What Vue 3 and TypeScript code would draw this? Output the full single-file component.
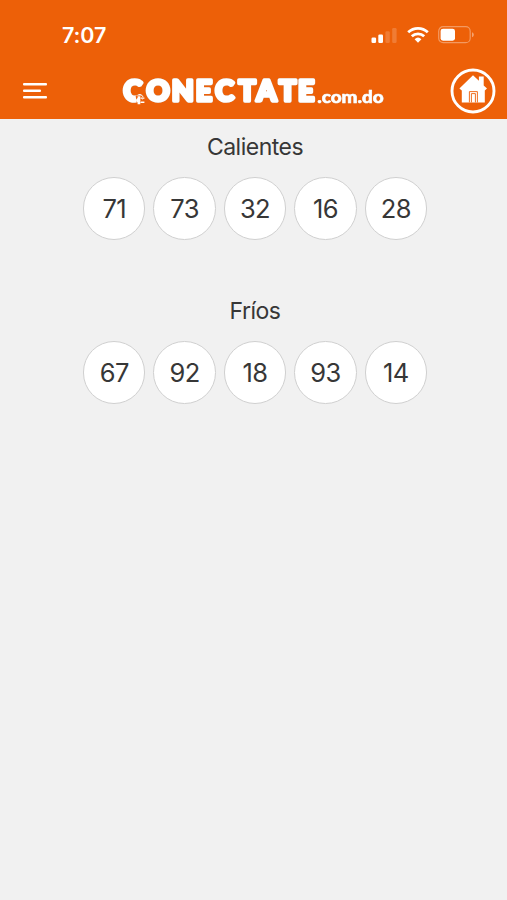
<script setup lang="ts">
interface NumberGroup {
  title: string
  numbers: number[]
}

const groups: NumberGroup[] = [
  { title: 'Calientes', numbers: [71, 73, 32, 16, 28] },
  { title: 'Fríos', numbers: [67, 92, 18, 93, 14] },
]
</script>

<template>
  <div class="screen">
    <header class="header">
      <div class="status">
        <span class="time">7:07</span>
        <div class="indicators">
          <svg class="signal" width="26" height="18" viewBox="0 0 26 18" fill="#fff">
            <rect x="0.5" y="11.5" width="4.6" height="5.5" rx="1.3" />
            <rect x="7.3" y="8.5" width="4.7" height="8.5" rx="1.3" />
            <rect x="14.4" y="5.2" width="4.4" height="11.8" rx="1.3" opacity=".18" />
            <rect x="21.2" y="2" width="4.4" height="15" rx="1.3" opacity=".18" />
          </svg>
          <svg class="wifi" width="24" height="18" viewBox="0 0 24 18">
            <g fill="none" stroke="#fff" stroke-width="2.8">
              <path d="M2.2 6.3A14.3 14.3 0 0 1 21.8 6.3" />
              <path d="M5.8 10.3A9 9 0 0 1 18.2 10.3" />
            </g>
            <path d="M8.6 13.2A5 5 0 0 1 15.4 13.2L12 16.7Z" fill="#fff" />
          </svg>
          <svg class="battery" width="37" height="18" viewBox="0 0 37 18">
            <rect x="0.7" y="0.7" width="31.5" height="16" rx="4.5" fill="none" stroke="#fff" stroke-opacity=".36" stroke-width="1.2" />
            <rect x="2.6" y="2.7" width="14.4" height="12" rx="2.4" fill="#fff" />
            <path d="M34 6.2C36.4 7 36.4 10.4 34 11.2Z" fill="#fff" opacity=".42" />
          </svg>
        </div>
      </div>
      <div class="bar">
        <button class="menu" aria-label="Menú">
          <svg width="24" height="18" viewBox="0 0 24 18" fill="#fff">
            <rect x="0" y="1" width="24" height="2.4" rx="1" />
            <rect x="0" y="7.5" width="18" height="2.4" rx="1" />
            <rect x="0" y="14" width="24" height="2.4" rx="1" />
          </svg>
        </button>
        <svg class="logo" width="270" height="36" viewBox="118 72 270 36">
          <g class="wordmark">
            <text y="100" x="123.4 146.6 171.8 195.7 215.2 238.5 256.5 279 298">CONECTATE</text>
          </g>
          <text class="domain" x="317.2" y="102" textLength="66.5" lengthAdjust="spacingAndGlyphs">.com.do</text>
          <path class="plug-gap" d="M136.2 95H141.5V104H137.5Z" />
          <path d="M137.6 95.2H140.4V103.2H137.6V101.4Q136 100.6 136 99.2Q136 97.8 137.6 97Z" fill="#fff" />
          <path d="M140.4 97.1H144.6M140.4 101.3H144.6" stroke="#ed6008" stroke-width="2.6" />
          <path d="M140.4 97.1H144.4M140.4 101.3H144.4" stroke="#fff" stroke-width="1.4" />
        </svg>
        <svg class="home" width="46" height="46" viewBox="0 0 46 46">
          <circle cx="23" cy="23" r="21" fill="none" stroke="#fff" stroke-width="2.9" />
          <path d="M23 7.2L9.4 20.6L11.8 22.4V34.4H34.8V22.4L37 20.6L33.7 17.4V8.6H28.9V12.8Z" fill="#fff" />
          <path d="M19.4 34.4V23.6H27.4V34.4M21.4 34.4V25.6H25.4V34.4" fill="none" stroke="#ed6008" stroke-width=".9" />
        </svg>
      </div>
    </header>
    <main class="content">
      <section v-for="group in groups" :key="group.title" class="group">
        <h2 class="title">{{ group.title }}</h2>
        <div class="balls">
          <span v-for="n in group.numbers" :key="n" class="ball">{{ n }}</span>
        </div>
      </section>
    </main>
  </div>
</template>

<style>
body {
  background: #f1f1f1;
}
</style>

<style scoped>
.screen {
  min-height: 100vh;
  background: #f1f1f1;
  color: #373737;
  font-family: Inter, "Liberation Sans", sans-serif;
}
.header {
  box-sizing: border-box;
  height: 119px;
  background: #ed6008;
  color: #fff;
}
.status {
  box-sizing: border-box;
  height: 69px;
  padding: 0 32px 0 62px;
  display: flex;
  align-items: center;
  justify-content: space-between;
}
.time {
  font-size: 21.5px;
  font-weight: 600;
  letter-spacing: -0.1px;
  line-height: 24px;
}
.indicators {
  display: flex;
  align-items: center;
}
.wifi {
  margin-left: 9px;
}
.battery {
  margin-left: 8px;
}
.bar {
  height: 44px;
  padding: 0 11px 0 23px;
  display: flex;
  align-items: center;
}
.menu {
  width: 24px;
  height: 18px;
  padding: 0;
  border: 0;
  background: none;
  display: flex;
}
.logo {
  margin-left: 71px;
  overflow: visible;
}
.logo text {
  font-family: Lato, "Open Sans", sans-serif;
  font-weight: 900;
  fill: #fff;
  stroke: #fff;
  stroke-linejoin: round;
  filter: drop-shadow(0.8px 0.9px 0.6px rgba(130, 90, 70, 0.6));
}
.wordmark text {
  font-size: 28.5px;
  stroke-width: 3.6px;
}
.logo .domain {
  font-size: 17px;
  stroke-width: 0.6px;
}
.plug-gap {
  fill: #ed6008;
  stroke: #ed6008;
  stroke-width: 1px;
}
.home {
  margin-left: auto;
}
.content {
  padding-top: 14px;
}
.group {
  height: 164px;
}
.title {
  margin: 0;
  padding-left: 3px;
  font-size: 23px;
  font-weight: 400;
  letter-spacing: -0.5px;
  line-height: 28px;
  text-align: center;
}
.balls {
  margin-top: 16px;
  padding-left: 3px;
  display: flex;
  justify-content: center;
  gap: 7.9px;
}
.ball {
  box-sizing: border-box;
  width: 62.5px;
  height: 62.5px;
  border: 1.5px solid #d0d0d0;
  border-radius: 50%;
  background: #fff;
  display: flex;
  align-items: center;
  justify-content: center;
  font-size: 25.5px;
  letter-spacing: -0.6px;
}
</style>
